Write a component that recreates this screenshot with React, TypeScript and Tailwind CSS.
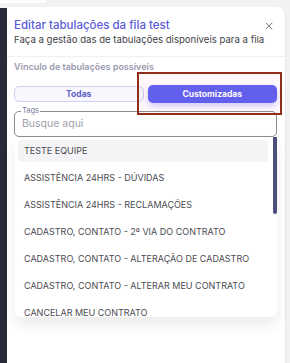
import { X } from 'lucide-react';

const tabulacoes = [
  'TESTE EQUIPE',
  'ASSISTÊNCIA 24HRS - DÚVIDAS',
  'ASSISTÊNCIA 24HRS - RECLAMAÇÕES',
  'CADASTRO, CONTATO - 2º VIA DO CONTRATO',
  'CADASTRO, CONTATO - ALTERAÇÃO DE CADASTRO',
  'CADASTRO, CONTATO - ALTERAR MEU CONTRATO',
  'CANCELAR MEU CONTRATO',
];

export default function App() {
  return (
    <div
      className="relative w-[290px] h-[363px] overflow-hidden bg-[#f2f2f4] flex"
      style={{ fontFamily: 'Inter, "Noto Sans", sans-serif' }}
    >
      {/* top-left leftover of the page behind */}
      <div className="absolute left-0 top-0 w-[46px] h-[3px] bg-white rounded-br" />

      {/* dark sidebar peeking on the left */}
      <div className="w-[7px] mt-[8px] bg-[#272b37] flex-shrink-0" />

      {/* modal */}
      <div className="flex-1 mt-[7px] mr-[4px] bg-white rounded-tr-lg border-r border-[#e6e6ea] flex flex-col">
        <div className="flex items-start justify-between pl-[7px] pr-[10px] pt-[10px]">
          <h2 className="text-[11.5px] leading-[16px] font-medium text-[#5a5bd8]">
            Editar tabulações da fila test
          </h2>
          <X size={12} strokeWidth={1.8} className="text-[#6b6b70] mt-[3px]" />
        </div>
        <p className="pl-[7px] text-[9.6px] leading-[13px] text-[#3f3f46] whitespace-nowrap">
          Faça a gestão das de tabulações disponíveis para a fila
        </p>

        <div className="mt-[10px] border-t border-[#f1eef6] pl-[7px] pr-[4px]">
          <div className="text-[9px] font-semibold text-[#9a9aae] mt-[3px] leading-[13px]">
            Vinculo de tabulações possíveis
          </div>

          {/* tabs */}
          <div className="grid grid-cols-2 gap-[4px] mt-[12px] pr-[4px]">
            <button className="h-[16px] mt-[1px] rounded-[5px] border border-[#cfd0f2] bg-[#f7f7fd] text-[8.5px] font-bold text-[#5b5cc9]">
              Todas
            </button>
            <button className="h-[18px] rounded-[5px] bg-[#5b5ef0] text-[8.5px] font-bold text-white shadow-[0_3px_6px_rgba(91,94,240,0.3)]">
              Customizadas
            </button>
          </div>

          {/* search field */}
          <div className="relative mt-[8px] mr-[4px] h-[26px] rounded-[5px] border border-[#8c8c92] flex items-center px-[7px]">
            <span className="absolute -top-[6px] left-[6px] bg-white px-[1px] text-[7.5px] leading-[10px] text-[#7a7a9c]">
              Tags
            </span>
            <span className="text-[10.5px] text-[#a1a1aa]">Busque aqui</span>
          </div>

          {/* dropdown list */}
          <div className="mr-[4px] ml-[1px] h-[180px] flex bg-white rounded-b-md shadow-[0_8px_14px_rgba(0,0,0,0.08)] overflow-hidden">
            <div className="flex-1 pt-[3px] pl-[3px] pr-[5px]">
              {tabulacoes.map((item, i) => (
                <div
                  key={item}
                  className={
                    'h-[22px] mb-[5px] flex items-center pl-[6px] text-[9px] text-[#4a4a52] rounded-[4px] whitespace-nowrap ' +
                    (i === 0 ? 'bg-[#f4f4f6]' : '')
                  }
                >
                  {item}
                </div>
              ))}
            </div>
            <div className="w-[4px] flex-shrink-0">
              <div className="h-[77px] bg-[#4b4f7a] rounded-b-sm" />
            </div>
          </div>
        </div>
      </div>

      {/* annotation box */}
      <div className="absolute left-[137px] top-[72px] w-[145px] h-[43px] border-2 border-[#8e2f1c] bg-[#ff6fb0]/5" />
    </div>
  );
}
